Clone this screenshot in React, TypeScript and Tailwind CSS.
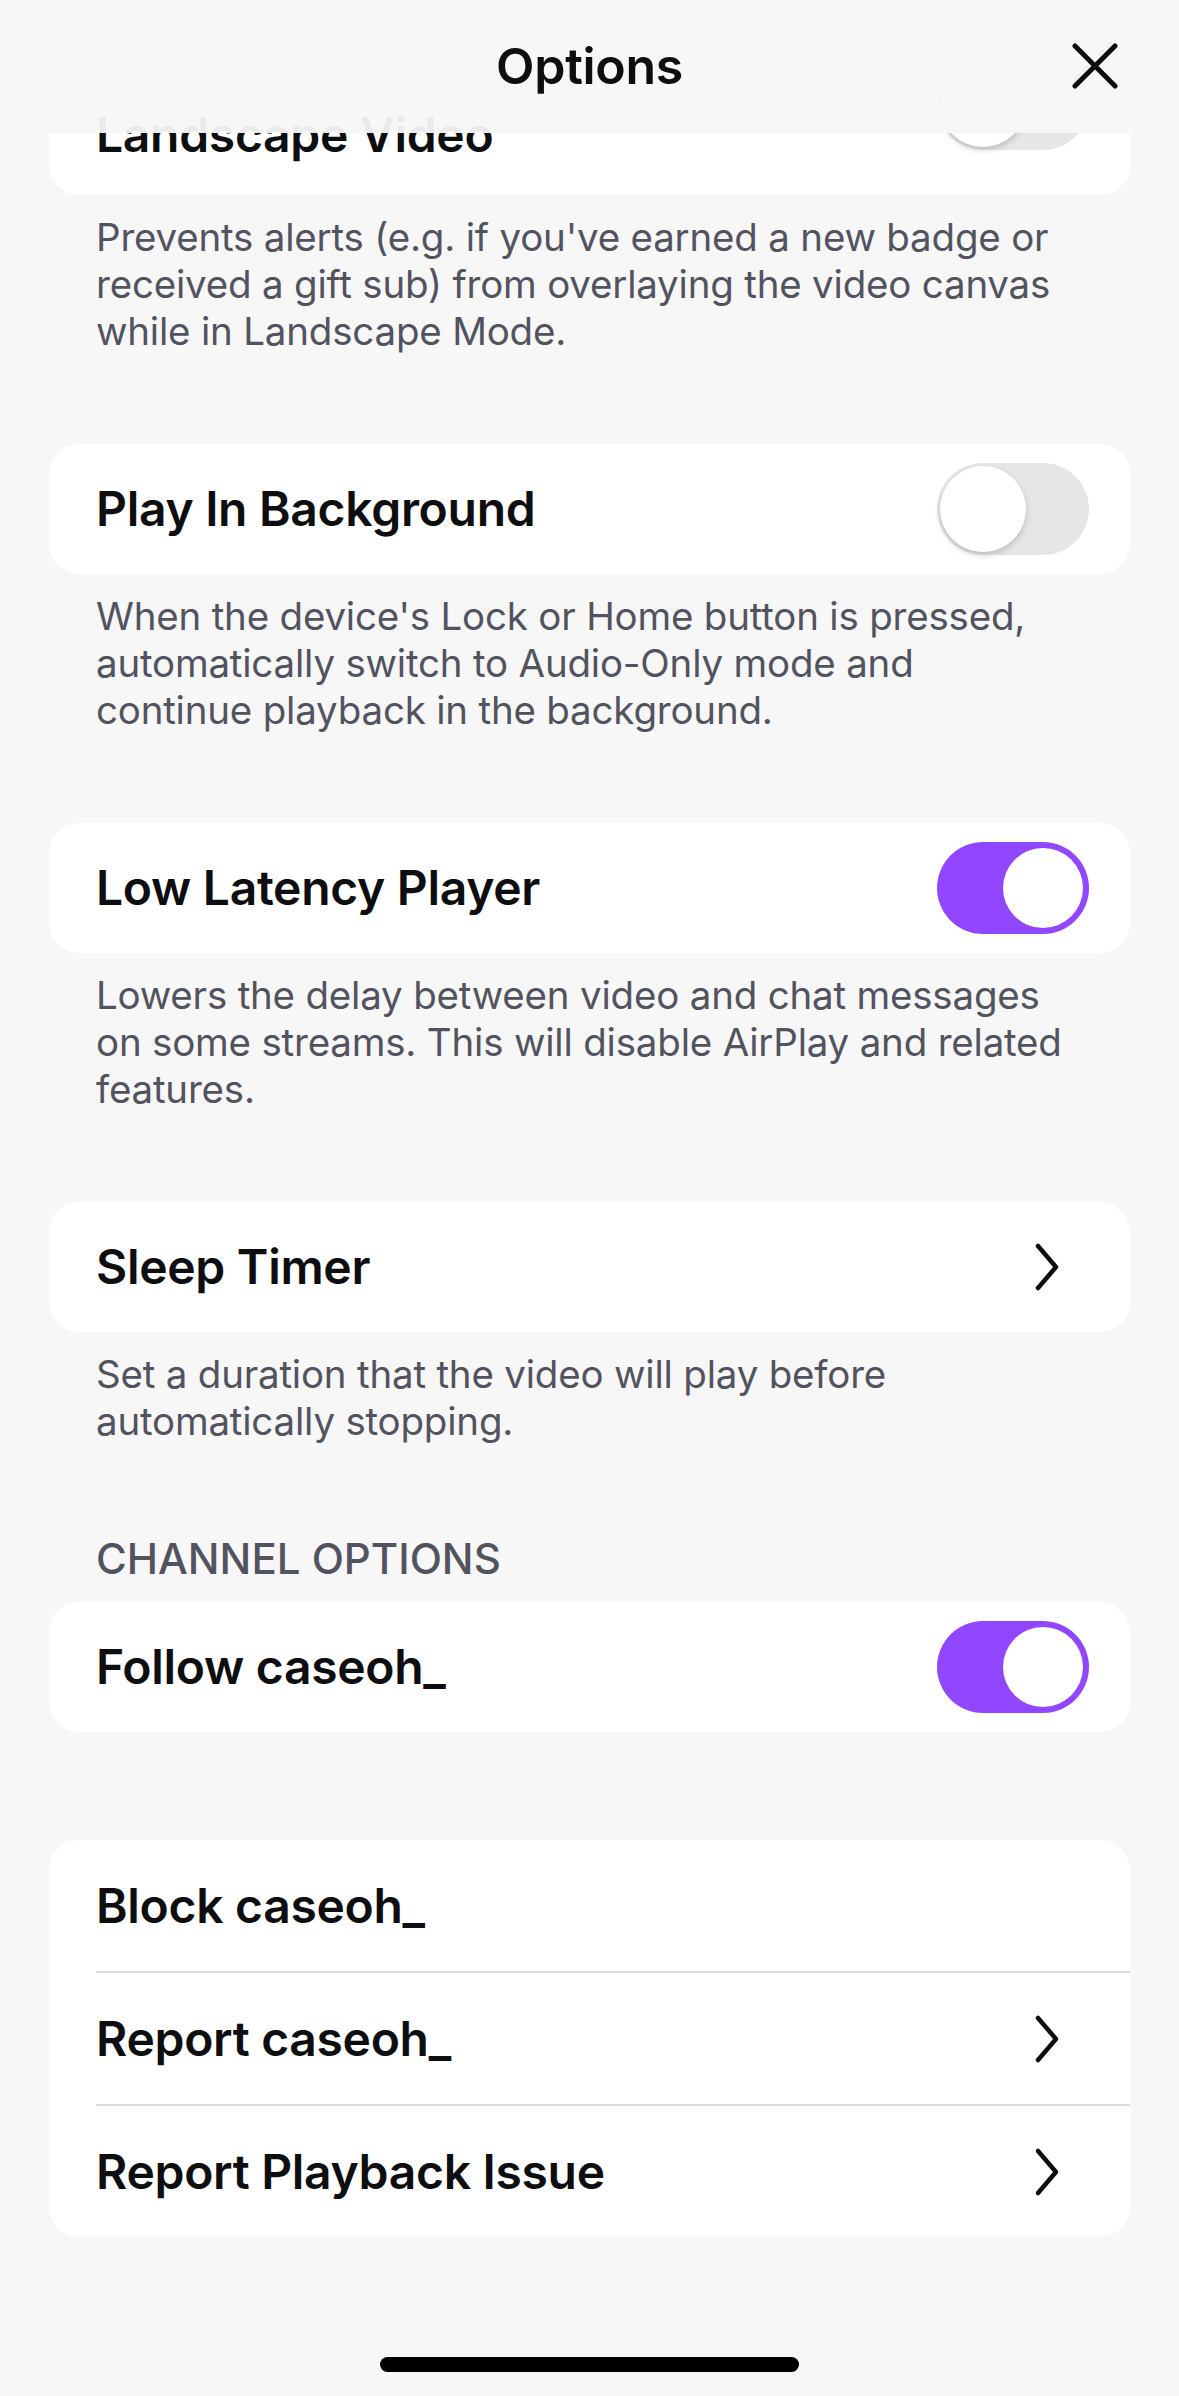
import React from "react";

const font = { fontFamily: "Inter, 'Noto Sans', sans-serif" };

function Toggle({ on }: { on: boolean }) {
  return on ? (
    <div className="w-[152px] h-[92px] rounded-full bg-[#9147ff] flex items-center justify-end pr-[6px] shrink-0">
      <div className="w-[80px] h-[80px] rounded-full bg-white" />
    </div>
  ) : (
    <div className="w-[152px] h-[92px] rounded-full bg-[#e6e6e6] flex items-center justify-start pl-[3px] shrink-0">
      <div className="w-[86px] h-[86px] rounded-full bg-white shadow-[0_3px_6px_rgba(0,0,0,0.18)]" />
    </div>
  );
}

function Chevron() {
  return (
    <svg width="30" height="50" viewBox="0 0 30 50" className="shrink-0 mr-[27px]">
      <polyline points="6,4 24,25 6,46" fill="none" stroke="#0e0e10" strokeWidth="4.5" strokeLinecap="round" strokeLinejoin="round" />
    </svg>
  );
}

const titleCls = "text-[48px] font-semibold text-[#0e0e10] tracking-[-0.3px]";

function Card({ title, right }: { title: string; right?: React.ReactNode }) {
  return (
    <div className="mx-[49px] h-[130px] bg-white rounded-[30px] flex items-center justify-between pl-[47px] pr-[41px]">
      <span className={titleCls}>{title}</span>
      {right}
    </div>
  );
}

function Desc({ lines }: { lines: string[] }) {
  return (
    <p className="mx-[49px] pl-[47px] pr-[20px] pt-[19px] pb-[89px] text-[38.5px] leading-[47px] text-[#53535f] tracking-[-0.2px] whitespace-nowrap">
      {lines.map((l, i) => (
        <React.Fragment key={i}>
          {l}
          {i < lines.length - 1 && <br />}
        </React.Fragment>
      ))}
    </p>
  );
}

export default function App() {
  return (
    <div className="relative w-[1179px] h-[2396px] bg-[#f7f7f8] overflow-hidden" style={font}>
      <div className="pt-[65px]">
        <div className="mx-[49px] h-[130px] bg-white rounded-[30px] flex items-center justify-between pl-[47px] pr-[41px]">
          <span className={titleCls + " pt-[10px]"}>Landscape Video</span>
          <div className="self-start -mt-[7px]">
            <Toggle on={false} />
          </div>
        </div>
        <Desc
          lines={[
            "Prevents alerts (e.g. if you've earned a new badge or",
            "received a gift sub) from overlaying the video canvas",
            "while in Landscape Mode.",
          ]}
        />
        <Card title="Play In Background" right={<Toggle on={false} />} />
        <Desc
          lines={[
            "When the device's Lock or Home button is pressed,",
            "automatically switch to Audio-Only mode and",
            "continue playback in the background.",
          ]}
        />
        <Card title="Low Latency Player" right={<Toggle on={true} />} />
        <Desc
          lines={[
            "Lowers the delay between video and chat messages",
            "on some streams. This will disable AirPlay and related",
            "features.",
          ]}
        />
        <Card title="Sleep Timer" right={<Chevron />} />
        <Desc lines={["Set a duration that the video will play before", "automatically stopping."]} />
        <div className="mx-[49px] pl-[47px] h-[48px] flex items-center mb-[20px] text-[42px] font-medium text-[#53535f]">
          CHANNEL OPTIONS
        </div>
        <Card title="Follow caseoh_" right={<Toggle on={true} />} />
        <div className="mx-[49px] mt-[108px] bg-white rounded-[30px] flex flex-col">
          <div className="h-[131px] flex items-center pl-[47px]">
            <span className={titleCls}>Block caseoh_</span>
          </div>
          <div className="ml-[47px] h-[2px] bg-[#dcdcdc]" />
          <div className="h-[131px] flex items-center justify-between pl-[47px] pr-[41px]">
            <span className={titleCls}>Report caseoh_</span>
            <Chevron />
          </div>
          <div className="ml-[47px] h-[2px] bg-[#dcdcdc]" />
          <div className="h-[131px] flex items-center justify-between pl-[47px] pr-[41px]">
            <span className={titleCls}>Report Playback Issue</span>
            <Chevron />
          </div>
        </div>
      </div>

      <div className="absolute top-0 left-0 right-0 h-[133px] bg-[#f7f7f8]/95 flex items-center justify-center">
        <span className="text-[50px] font-semibold text-[#0e0e10] tracking-[-0.3px]">Options</span>
        <button className="absolute right-[60px] top-[42px] w-[48px] h-[48px] flex items-center justify-center">
          <svg width="46" height="46" viewBox="0 0 46 46">
            <path d="M3 3 L43 43 M43 3 L3 43" stroke="#0e0e10" strokeWidth="5" strokeLinecap="round" />
          </svg>
        </button>
      </div>

      <div className="absolute left-[380px] top-[2357px] w-[419px] h-[15px] rounded-full bg-black" />
    </div>
  );
}
